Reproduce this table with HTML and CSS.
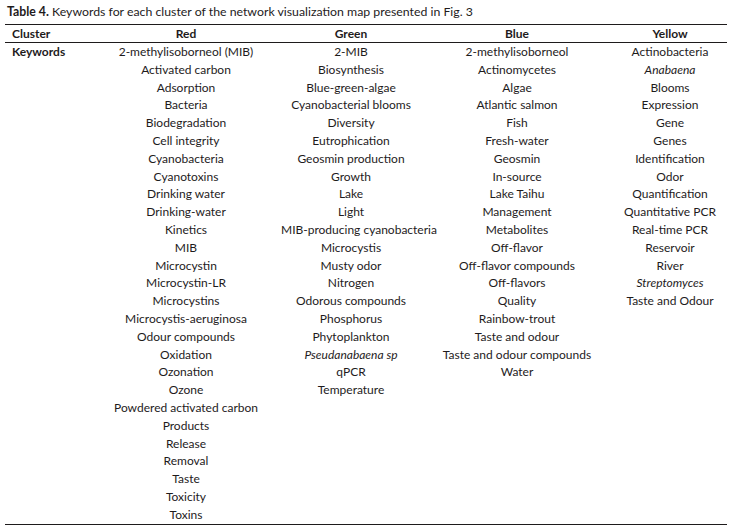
FILE: index.html
```html
<!DOCTYPE html>
<html lang="en">
<head>
<meta charset="utf-8">
<title>Table 4</title>
<link rel="stylesheet" href="styles.css">
</head>
<body>
<div class="page">
  <p class="caption"><b>Table 4.</b> Keywords for each cluster of the network visualization map presented in Fig. 3</p>
  <table class="kw">
    <colgroup>
      <col class="col-cluster">
      <col class="col-red">
      <col class="col-green">
      <col class="col-blue">
      <col class="col-yellow">
    </colgroup>
    <thead>
      <tr><th class="first">Cluster</th><th>Red</th><th>Green</th><th>Blue</th><th>Yellow</th></tr>
    </thead>
    <tbody>
      <tr><td class="first">Keywords</td><td>2-methylisoborneol (MIB)</td><td>2-MIB</td><td>2-methylisoborneol</td><td>Actinobacteria</td></tr>
      <tr><td class="first"></td><td>Activated carbon</td><td>Biosynthesis</td><td>Actinomycetes</td><td><i>Anabaena</i></td></tr>
      <tr><td class="first"></td><td>Adsorption</td><td>Blue-green-algae</td><td>Algae</td><td>Blooms</td></tr>
      <tr><td class="first"></td><td>Bacteria</td><td>Cyanobacterial blooms</td><td>Atlantic salmon</td><td>Expression</td></tr>
      <tr><td class="first"></td><td>Biodegradation</td><td>Diversity</td><td>Fish</td><td>Gene</td></tr>
      <tr><td class="first"></td><td>Cell integrity</td><td>Eutrophication</td><td>Fresh-water</td><td>Genes</td></tr>
      <tr><td class="first"></td><td>Cyanobacteria</td><td>Geosmin production</td><td>Geosmin</td><td>Identification</td></tr>
      <tr><td class="first"></td><td>Cyanotoxins</td><td>Growth</td><td>In-source</td><td>Odor</td></tr>
      <tr><td class="first"></td><td>Drinking water</td><td>Lake</td><td>Lake Taihu</td><td>Quantification</td></tr>
      <tr><td class="first"></td><td>Drinking-water</td><td>Light</td><td>Management</td><td>Quantitative PCR</td></tr>
      <tr><td class="first"></td><td>Kinetics</td><td>MIB-producing cyanobacteria</td><td>Metabolites</td><td>Real-time PCR</td></tr>
      <tr><td class="first"></td><td>MIB</td><td>Microcystis</td><td>Off-flavor</td><td>Reservoir</td></tr>
      <tr><td class="first"></td><td>Microcystin</td><td>Musty odor</td><td>Off-flavor compounds</td><td>River</td></tr>
      <tr><td class="first"></td><td>Microcystin-LR</td><td>Nitrogen</td><td>Off-flavors</td><td><i>Streptomyces</i></td></tr>
      <tr><td class="first"></td><td>Microcystins</td><td>Odorous compounds</td><td>Quality</td><td>Taste and Odour</td></tr>
      <tr><td class="first"></td><td>Microcystis-aeruginosa</td><td>Phosphorus</td><td>Rainbow-trout</td><td></td></tr>
      <tr><td class="first"></td><td>Odour compounds</td><td>Phytoplankton</td><td>Taste and odour</td><td></td></tr>
      <tr><td class="first"></td><td>Oxidation</td><td><i>Pseudanabaena sp</i></td><td>Taste and odour compounds</td><td></td></tr>
      <tr><td class="first"></td><td>Ozonation</td><td>qPCR</td><td>Water</td><td></td></tr>
      <tr><td class="first"></td><td>Ozone</td><td>Temperature</td><td></td><td></td></tr>
      <tr><td class="first"></td><td>Powdered activated carbon</td><td></td><td></td><td></td></tr>
      <tr><td class="first"></td><td>Products</td><td></td><td></td><td></td></tr>
      <tr><td class="first"></td><td>Release</td><td></td><td></td><td></td></tr>
      <tr><td class="first"></td><td>Removal</td><td></td><td></td><td></td></tr>
      <tr><td class="first"></td><td>Taste</td><td></td><td></td><td></td></tr>
      <tr><td class="first"></td><td>Toxicity</td><td></td><td></td><td></td></tr>
      <tr><td class="first"></td><td>Toxins</td><td></td><td></td><td></td></tr>
    </tbody>
  </table>
</div>
</body>
</html>
```
FILE: styles.css
```css
html, body {
  margin: 0;
  padding: 0;
  background: #ffffff;
}

body {
  font-family: Lato, "Open Sans", sans-serif;
  font-size: 12px;
  color: #1e1b1c;
}

.page {
  padding: 0 3px 0 5px;
}

.caption {
  margin: 0;
  padding: 4px 0 4px 2px;
  font-size: 12.3px;
  line-height: 16px;
}

.caption b {
  font-weight: 700;
}

.kw {
  width: 722px;
  border-collapse: collapse;
  table-layout: fixed;
  border-top: 1px solid #1e1b1c;
  border-bottom: 1px solid #1e1b1c;
}

.col-cluster { width: 86px; }
.col-red { width: 190px; }
.col-green { width: 140px; }
.col-blue { width: 192px; }
.col-yellow { width: 114px; }

.kw th {
  height: 17px;
  padding: 0;
  font-weight: 700;
  text-align: center;
  line-height: 17px;
  border-bottom: 1px solid #1e1b1c;
}

.kw td {
  height: 17.8px;
  padding: 0;
  text-align: center;
  line-height: 17.8px;
  white-space: nowrap;
}

.kw .first {
  text-align: left;
  padding-left: 7px;
}

.kw td.first {
  font-weight: 700;
}
```
